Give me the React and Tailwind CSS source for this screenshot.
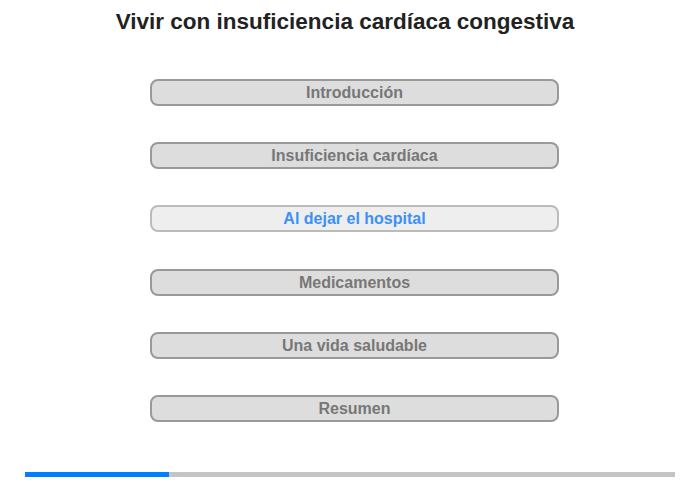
const chapters = [
  "Introducción",
  "Insuficiencia cardíaca",
  "Al dejar el hospital",
  "Medicamentos",
  "Una vida saludable",
  "Resumen",
];

const active = 2;

export default function App() {
  return (
    <div className="w-[700px] h-[480px] bg-white relative font-['Liberation_Sans',Arial,sans-serif]">
      <h1 className="pt-[9px] pr-[10px] text-center text-[22.5px] leading-[26px] font-bold text-[#222]">
        Vivir con insuficiencia cardíaca congestiva
      </h1>

      <div className="mt-[44px] ml-[150px] w-[409px] flex flex-col gap-[36.2px]">
        {chapters.map((c, i) => (
          <button
            key={c}
            className={
              i === active
                ? "h-[27px] rounded-[8px] border-2 border-[#bbb] bg-[#eee] text-[16px] leading-[23px] font-bold text-[#3b91f7]"
                : "h-[27px] rounded-[8px] border-2 border-[#999] bg-[#ddd] text-[16px] leading-[23px] font-bold text-[#777]"
            }
          >
            {c}
          </button>
        ))}
      </div>

      {/* progress */}
      <div className="absolute left-[25px] top-[472px] w-[650px] h-[5px] bg-[#c4c4c4]">
        <div className="h-full w-[144px] bg-[#0080ff]" />
      </div>
    </div>
  );
}
